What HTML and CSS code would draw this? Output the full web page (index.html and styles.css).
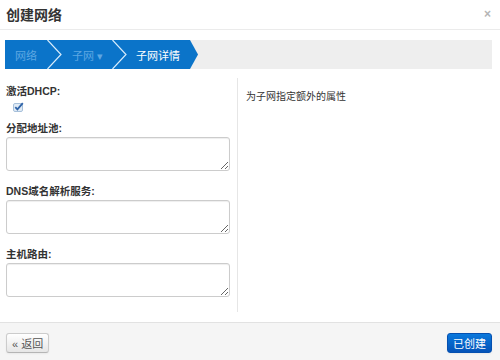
FILE: index.html
```html
<!DOCTYPE html>
<html lang="zh-CN">
<head>
  <meta charset="UTF-8" />
  <title>创建网络</title>
  <link rel="stylesheet" href="styles.css">
</head>
<body>
  <div class="modal">
    <div class="modal-header">
      <h3>创建网络</h3>
      <span class="close">×</span>
    </div>

    <div class="modal-body">
      <div class="wizard">
        <div class="steps">
          <span class="step step-net">网络</span>
          <svg class="sep" width="15" height="29" viewBox="0 0 15 29"><polyline points="0.5,0 14,14.5 0.5,29" fill="none" stroke="#d6ebfb" stroke-width="1.2"/></svg>
          <span class="step step-sub">子网 ▾</span>
          <svg class="sep" width="15" height="29" viewBox="0 0 15 29"><polyline points="0.5,0 14,14.5 0.5,29" fill="none" stroke="#d6ebfb" stroke-width="1.2"/></svg>
          <span class="step step-detail active">子网详情</span>
        </div>
      </div>

      <div class="cols">
        <div class="left">
          <label class="lbl">激活DHCP:</label>
          <div class="check">
            <svg width="11" height="10" viewBox="0 0 11 10">
              <rect x="0.5" y="1.5" width="9" height="8" rx="1.5" fill="#dfeaf5" stroke="#a7c0da"/>
              <path d="M2.3 5.2 L4.4 7.4 L9.8 1.2" fill="none" stroke="#2f63a8" stroke-width="1.8"/>
            </svg>
          </div>

          <label class="lbl">分配地址池:</label>
          <textarea class="field"></textarea>

          <label class="lbl">DNS域名解析服务:</label>
          <textarea class="field"></textarea>

          <label class="lbl">主机路由:</label>
          <textarea class="field last"></textarea>
        </div>
        <div class="right">
          <p>为子网指定额外的属性</p>
        </div>
      </div>
    </div>

    <div class="modal-footer">
      <button class="btn">« 返回</button>
      <button class="btn btn-primary">已创建</button>
    </div>
  </div>
</body>
</html>
```

FILE: styles.css
```css
body {
  margin: 0;
  background: #fff;
  font-family: "Liberation Sans", "Noto Sans CJK SC", sans-serif;
  color: #333;
}

.modal {
  width: 500px;
  height: 360px;
  display: flex;
  flex-direction: column;
}

.modal-header {
  height: 30px;
  box-sizing: border-box;
  border-bottom: 1px solid #ebebeb;
  display: flex;
  justify-content: space-between;
  align-items: center;
  padding: 0 9px 2px 6px;
}

.modal-header h3 {
  margin: 0;
  font-size: 14px;
  font-weight: bold;
  color: #333;
}

.close {
  color: #b5b5b5;
  font-size: 12px;
  font-weight: bold;
}

.modal-body {
  padding: 10px 8px 0 5px;
}

.wizard {
  height: 29px;
  background: #eeeeee;
  display: flex;
}

.steps {
  width: 193px;
  display: flex;
  align-items: center;
  background: #0b74c9;
  clip-path: polygon(0 0, calc(100% - 8px) 0, 100% 50%, calc(100% - 8px) 100%, 0 100%);
}

.step {
  font-size: 11px;
  color: #5ea7e2;
  padding-left: 10px;
  white-space: nowrap;
}

.step-net { width: 32px; }
.step-sub { width: 40px; }
.step-detail { flex: 1; padding-left: 9px; }

.step.active {
  color: #fff;
}

.sep {
  display: block;
  flex: none;
}

.cols {
  display: flex;
  margin-top: 9px;
}

.left {
  width: 224px;
  padding: 6px 7px 15px 1px;
}

.right {
  flex: 1;
  border-left: 1px solid #e6e6e6;
  padding-left: 8px;
}

.right p {
  margin: 10px 0 0;
  font-size: 10px;
  color: #333;
}

.lbl {
  display: block;
  font-size: 10.5px;
  font-weight: bold;
  line-height: 14px;
  color: #333;
}

.check {
  margin: 4px 0 9px 7px;
  height: 10px;
}

.check svg {
  display: block;
}

.field {
  display: block;
  width: 224px;
  height: 34px;
  box-sizing: border-box;
  margin: 2px 0 13px;
  border: 1px solid #cccccc;
  border-radius: 3px;
  box-shadow: inset 0 1px 1px rgba(0, 0, 0, 0.07);
  resize: vertical;
  font-family: inherit;
}

.field.last {
  margin-bottom: 0;
}

.modal-footer {
  margin-top: 10px;
  flex: 1;
  border-top: 1px solid #e2e2e2;
  background: #f5f5f5;
  display: flex;
  justify-content: space-between;
  align-items: flex-start;
  padding: 10px 8px 0 6px;
}

.btn {
  height: 20px;
  padding: 0 5px;
  font-family: inherit;
  font-size: 11px;
  color: #555;
  border: 1px solid #cccccc;
  border-bottom-color: #b5b5b5;
  border-radius: 3px;
  background: linear-gradient(#ffffff, #e6e6e6);
  box-shadow: 0 1px 2px rgba(0, 0, 0, 0.05);
}

.btn-primary {
  color: #fff;
  border-color: #0550b0;
  background: linear-gradient(#0a78dc, #0553b8);
}
```
